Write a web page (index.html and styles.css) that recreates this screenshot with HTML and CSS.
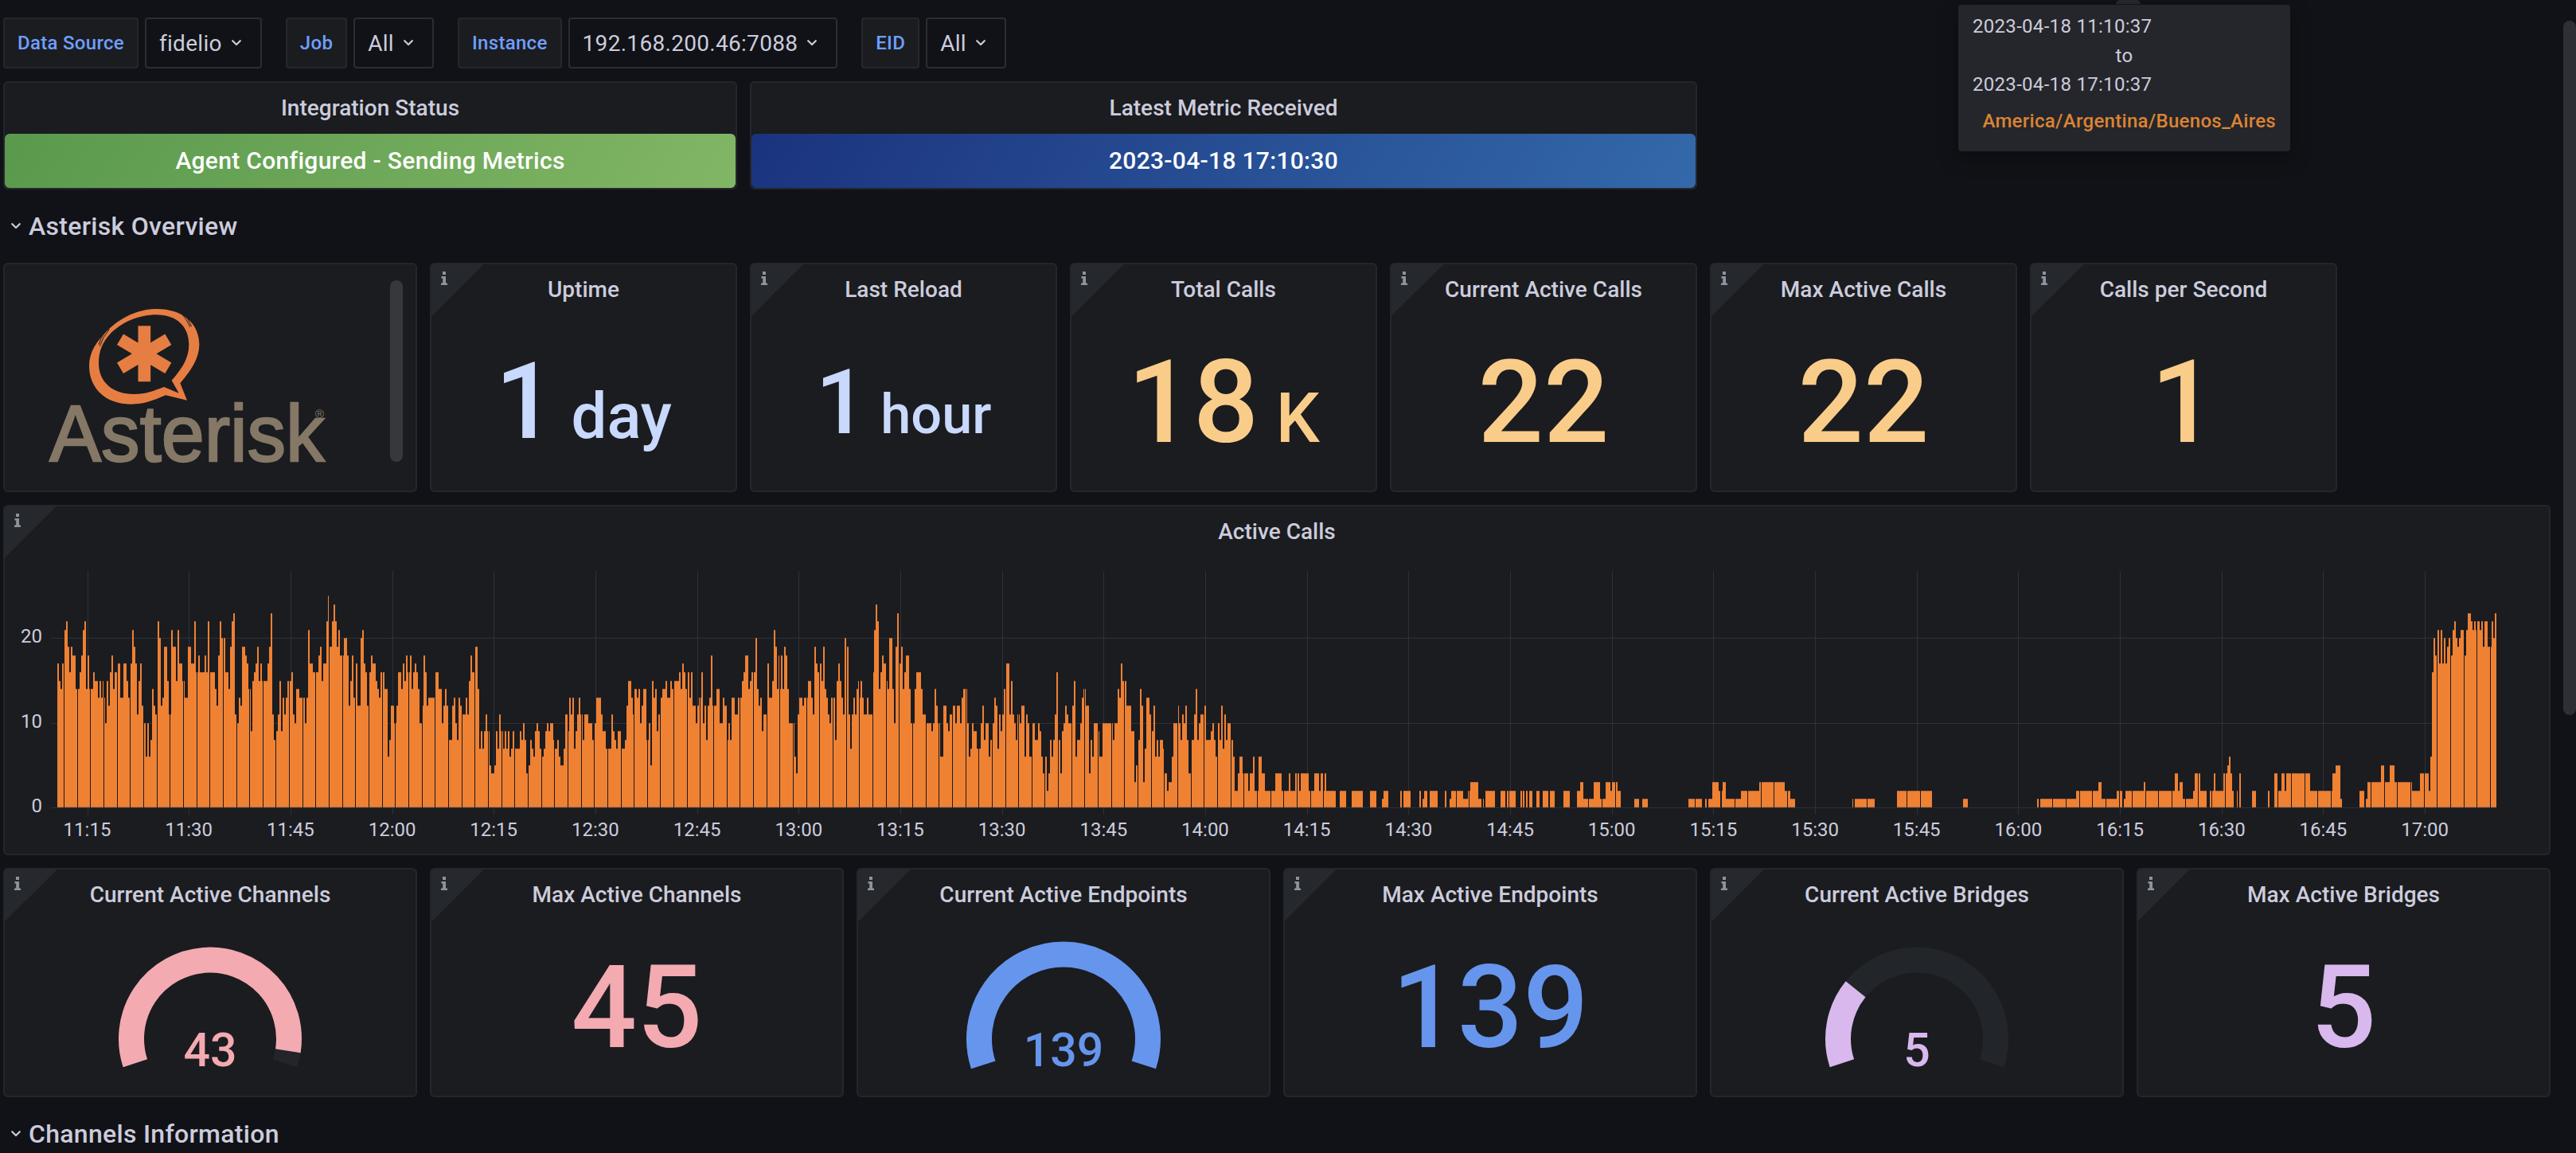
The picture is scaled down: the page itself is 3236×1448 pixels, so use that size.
FILE: index.html
```html
<!DOCTYPE html>
<html lang="en">
<head>
<meta charset="utf-8">
<title>Asterisk Overview</title>
<link rel="stylesheet" href="styles.css">
</head>
<body>
<svg class="defs" width="0" height="0">
  <symbol id="chev" viewBox="0 0 14 10"><path d="M2.2 2.2 L7 7 L11.8 2.2" fill="none" stroke="currentColor" stroke-width="2.2" stroke-linecap="round" stroke-linejoin="round"/></symbol>
  <symbol id="info" viewBox="0 0 8 17"><path d="M2 0H6V4H2ZM.4 6H6V14.4H8V17H0V14.4H2.2V8.6H.4Z" fill="currentColor"/></symbol>
</svg>
<main class="page">
  <div class="toolbar">
    <div class="var"><span class="var-label">Data Source</span><span class="var-value">fidelio<svg class="chev"><use href="#chev"/></svg></span></div>
    <div class="var"><span class="var-label">Job</span><span class="var-value">All<svg class="chev"><use href="#chev"/></svg></span></div>
    <div class="var"><span class="var-label">Instance</span><span class="var-value">192.168.200.46:7088<svg class="chev"><use href="#chev"/></svg></span></div>
    <div class="var"><span class="var-label">EID</span><span class="var-value">All<svg class="chev"><use href="#chev"/></svg></span></div>
  </div>

  <div class="grid">
    <section class="panel w7 h2"><h2>Integration Status</h2><div class="fill green">Agent Configured - Sending Metrics</div></section>
    <section class="panel w9 h2"><h2>Latest Metric Received</h2><div class="fill blue">2023-04-18 17:10:30</div></section>

    <h1 class="row-title"><svg class="chev"><use href="#chev"/></svg>Asterisk Overview</h1>

    <section class="panel w4 h4 logo-panel">
      <svg class="logo" viewBox="0 0 1140 690">
        <path fill="#e67e43" fill-rule="evenodd" d="M555 398 L474 379 C430 398 395 413 342 413 C250 413 186 355 186 268 C186 215 215 175 256 134 C305 86 370 54 440 54 C540 54 601 110 601 188 C601 240 570 285 529 334 Z M524 371 L497 323 C535 280 562 240 562 188 C562 120 515 76 440 76 C370 76 310 105 268 145 C235 180 222 215 222 258 C222 330 275 375 355 375 C400 375 430 362 468 348 Z"/>
        <path fill="none" stroke="#1b1c20" stroke-width="3" d="M262 130 Q238 158 226 194 M248 138 Q230 160 222 188 M528 66 Q552 88 566 122 M540 70 Q560 90 572 120"/>
        <path stroke="#e67e43" stroke-width="47" d="M394 118V328M303 169L484 277M484 169L303 277"/>
        <text x="37" y="626" class="logo-text" textLength="1036" lengthAdjust="spacingAndGlyphs">Asterisk</text>
        <text x="1037" y="466" class="logo-reg">®</text>
      </svg>
      <div class="inner-scroll"></div>
    </section>
    <section class="panel w3 h4"><i class="corner"><svg><use href="#info"/></svg></i><h2>Uptime</h2><div class="stat sky s133"><span>1</span><small> day</small></div></section>
    <section class="panel w3 h4"><i class="corner"><svg><use href="#info"/></svg></i><h2>Last Reload</h2><div class="stat sky s114"><span>1</span><small> hour</small></div></section>
    <section class="panel w3 h4"><i class="corner"><svg><use href="#info"/></svg></i><h2>Total Calls</h2><div class="stat amber"><span>18</span><small> K</small></div></section>
    <section class="panel w3 h4"><i class="corner"><svg><use href="#info"/></svg></i><h2>Current Active Calls</h2><div class="stat amber">22</div></section>
    <section class="panel w3 h4"><i class="corner"><svg><use href="#info"/></svg></i><h2>Max Active Calls</h2><div class="stat amber">22</div></section>
    <section class="panel w3 h4"><i class="corner"><svg><use href="#info"/></svg></i><h2>Calls per Second</h2><div class="stat amber">1</div></section>

    <section class="panel w24 h6"><i class="corner"><svg><use href="#info"/></svg></i><h2>Active Calls</h2>
      <svg id="chart" class="chart" viewBox="6 698 3196 374"></svg>
    </section>

    <section class="panel w4 h4"><i class="corner"><svg><use href="#info"/></svg></i><h2>Current Active Channels</h2>
      <svg class="gauge pink" viewBox="-258 -150.6 516 222"><path class="track" d="M-94.15 30.59A99 99 0 1 1 94.15 30.59"/><path class="arc" d="M-94.15 30.59A99 99 0 1 1 97.83 15.15"/><text y="34.4">43</text></svg></section>
    <section class="panel w4 h4"><i class="corner"><svg><use href="#info"/></svg></i><h2>Max Active Channels</h2><div class="stat pink">45</div></section>
    <section class="panel w4 h4"><i class="corner"><svg><use href="#info"/></svg></i><h2>Current Active Endpoints</h2>
      <svg class="gauge cornflower" viewBox="-258 -150.6 516 222"><path class="arc" d="M-100.8 32.76A106 106 0 1 1 100.8 32.76"/><text y="34.4">139</text></svg></section>
    <section class="panel w4 h4"><i class="corner"><svg><use href="#info"/></svg></i><h2>Max Active Endpoints</h2><div class="stat cornflower">139</div></section>
    <section class="panel w4 h4"><i class="corner"><svg><use href="#info"/></svg></i><h2>Current Active Bridges</h2>
      <svg class="gauge lilac" viewBox="-258 -150.6 516 222"><path class="track" d="M-94.15 30.59A99 99 0 1 1 94.15 30.59"/><path class="arc" d="M-94.15 30.59A99 99 0 0 1 -76.94 -62.3"/><text y="34.4">5</text></svg></section>
    <section class="panel w4 h4"><i class="corner"><svg><use href="#info"/></svg></i><h2>Max Active Bridges</h2><div class="stat lilac">5</div></section>

    <h1 class="row-title"><svg class="chev"><use href="#chev"/></svg>Channels Information</h1>
  </div>
</main>

<aside class="tooltip">
  <div>2023-04-18 11:10:37</div>
  <div class="mid">to</div>
  <div>2023-04-18 17:10:37</div>
  <div class="zone">America/Argentina/Buenos_Aires</div>
</aside>
<div class="page-scroll"></div>
<script src="chart.js"></script>
</body>
</html>
```
FILE: styles.css
```css
* { box-sizing: border-box; }
html, body { margin: 0; height: 1448px; overflow: hidden; }
body { background: #111217; color: #ccccdc; font-family: Roboto, "Liberation Sans", sans-serif; font-size: 28px; letter-spacing: 0.01071em; position: relative; }
.defs { position: absolute; }
.page { padding: 22px 0 0 4px; }
.toolbar { display: flex; gap: 30px; margin-bottom: 16px; }
.var { display: flex; gap: 8px; }
.var-label, .var-value { height: 64px; border: 2px solid #26272c; border-radius: 4px; display: flex; align-items: center; }
.var-label { background: #1b1c20; color: #6e9fff; font-size: 24px; font-weight: 500; padding: 0 16px; }
.var-value { border-color: #2c2d33; padding: 0 23px 0 16px; gap: 11px; }
.chev { width: 14px; height: 10px; flex: none; }
.grid { display: grid; width: 3200px; grid-template-columns: repeat(24, 1fr); grid-auto-rows: 60px; gap: 16px; grid-auto-flow: row; }
.panel { background: #1b1c20; border: 2px solid #25262b; border-radius: 6px; display: flex; flex-direction: column; position: relative; min-width: 0; overflow: hidden; }
.w3 { grid-column: span 3; } .w4 { grid-column: span 4; } .w7 { grid-column: span 7; } .w9 { grid-column: span 9; } .w24 { grid-column: span 24; }
.h2 { grid-row: span 2; } .h4 { grid-row: span 4; } .h6 { grid-row: span 6; }
.panel h2 { margin: 0; height: 62px; flex: none; font-size: 28px; font-weight: 500; line-height: 63px; text-align: center; letter-spacing: 0.02px; }
.fill { margin-top: 2px; padding-bottom: 2px; flex: 1; border-radius: 6px; color: #fff; font-weight: 500; font-size: 30px; display: flex; align-items: center; justify-content: center; }
.green { background: linear-gradient(120deg, #5a994d, #81b665); }
.blue { background: linear-gradient(120deg, #1b337e, #3369aa); }
.row-title { grid-column: 1 / -1; margin: 0; display: flex; align-items: center; gap: 9px; padding-left: 9px; font-size: 32px; font-weight: 500; letter-spacing: 0.3px; line-height: 60px; }
.corner { position: absolute; left: 0; top: 0; width: 65px; height: 65px; background: linear-gradient(135deg, #25282c 50%, transparent 50%); color: #91929e; }
.corner svg { display: block; width: 8px; height: 17px; margin: 9px 0 0 12px; }
.stat { flex: 1; display: flex; align-items: baseline; justify-content: center; font-size: 145px; font-weight: 500; line-height: 222px; letter-spacing: 0; white-space: pre; }
.stat small { font-size: 0.6em; line-height: 1; }
.s133 { font-size: 133px; }
.s114 { font-size: 114px; }
.sky { color: #c8d9fd; } .amber { color: #f9cd89; } .pink { color: #f3aab1; } .cornflower { color: #6695ed; } .lilac { color: #d8b8ed; }
.gauge { width: 516px; height: 222px; }
.gauge path { fill: none; stroke-width: 32; }
.gauge .arc { stroke: currentColor; }
.gauge .track { stroke: #22252a; }
.gauge text { fill: currentColor; font-size: 59px; font-weight: 500; text-anchor: middle; letter-spacing: 0; }
.logo-panel { flex-direction: row; }
.logo { width: 380px; height: 230px; margin: 38px 0 0 44px; }
.logo-text { font: 300px "Liberation Sans", Arial, sans-serif; fill: #857866; stroke: #857866; stroke-width: 7; letter-spacing: 0; }
.logo-reg { font: 46px "Liberation Sans", Arial, sans-serif; fill: #857866; letter-spacing: 0; }
.inner-scroll { width: 16px; height: 228px; margin: 20px 0 0 60px; border-radius: 8px; background: #37383c; }
.chart { width: 3196px; height: 374px; flex: none; }
.chart text { fill: #ccccdc; font-size: 24px; letter-spacing: 0; }
.tooltip { position: absolute; left: 2460px; top: 6px; width: 417px; height: 184px; padding: 9px 18px; background: #25262b; border-radius: 4px; font-size: 24px; line-height: 36.5px; box-shadow: 0 8px 24px rgba(1, 4, 9, .35); }
.tooltip::before { content: ""; position: absolute; top: -6px; left: 198px; width: 31px; height: 5px; background: #25262b; border-radius: 6px 6px 0 0; }
.mid { text-align: center; }
.zone { margin-top: 9px; text-align: right; color: #dd8433; font-weight: 500; white-space: nowrap; }
.page-scroll { position: absolute; left: 3220px; top: 26px; width: 16px; height: 872px; border-radius: 8px; background: #2e2f34; }
```
FILE: chart.js
```js
// Step data per stretch of the axis: "x:value" pairs, x measured from `from` at `k` units per pixel.
const stretches = [
  { from: 0, k: 1.96, end: 1568, d: "141:17 145:15 149:14 153:17 159:21 163:22 167:19 171:16 174:19 178:18 186:14 196:16 200:18 204:21 208:22 212:14 216:18 220:14 229:16 233:15 241:13 245:15 249:13 253:15 257:13 259:10 263:15 267:12 270:16 274:18 278:14 282:16 288:17 296:13 304:17 312:15 316:13 321:17 325:21 329:19 333:17 337:11 341:15 345:17 349:12 354:10 359:6 363:10 367:6 370:8 374:14 378:12 382:11 388:22 392:20 396:12 400:13 404:19 412:15 416:11 421:21 425:19 433:15 437:21 441:17 449:15 455:13 463:19 470:17 478:22 482:16 488:18 492:16 504:18 508:16 512:22 516:16 529:14 533:12 537:18 541:22 545:20 549:16 551:20 555:16 563:14 567:19 571:22 574:23 578:11 584:10 588:13 592:12 596:19 604:18 608:17 612:14 617:9 621:15 625:16 629:17 633:19 637:15 641:17 645:15 659:17 662:19 666:23 670:11 674:8 680:9 684:11 688:15 692:9 696:13 700:11 704:13 708:15 712:13 713:15 717:16 721:11 725:10 729:14 737:13 751:10 755:13 759:21 763:17 770:16 784:18 788:19 792:15 796:17 804:22 808:25 812:19 817:22 821:24 825:22 829:19 833:21 837:18 847:20 854:18 858:12 862:15 866:18 870:13 876:17 880:12 888:20 892:21 896:17 900:16 904:12 909:16 913:18 917:17 925:15 929:14 933:13 937:16 941:13 943:16 947:14 955:6 958:8 962:12 970:10 976:12 980:16 988:14 992:17 996:15 1000:18 1004:16 1009:18 1013:14 1017:16 1021:17 1025:16 1029:14 1033:10 1039:12 1043:18 1047:16 1051:12 1054:13 1072:16 1080:14 1088:10 1092:12 1096:14 1100:12 1104:8 1113:12 1117:13 1121:10 1125:8 1129:13 1133:12 1139:11 1147:13 1151:11 1154:15 1158:18 1162:16 1171:19 1176:14 1180:7 1184:9 1188:7 1192:9 1196:11 1200:9 1205:5 1209:4 1217:5 1221:9 1225:7 1229:11 1233:9 1238:7 1242:9 1246:7 1250:9 1254:6 1258:7 1262:9 1266:7 1280:9 1284:8 1288:10 1292:8 1296:4 1301:5 1305:8 1309:7 1313:6 1317:9 1321:10 1325:9 1329:7 1335:6 1339:7 1343:9 1347:10 1350:9 1354:10 1362:8 1366:7 1372:8 1376:6 1380:5 1388:7 1392:11 1397:9 1401:13 1405:11 1409:13 1413:7 1417:9 1421:11 1425:13 1429:11 1435:8 1439:11 1449:10 1458:8 1464:10 1468:13 1480:11 1484:9 1492:7 1505:11 1509:9 1513:8 1517:7 1521:9 1529:7 1539:8 1543:12 1546:15 1554:13 1558:11 1563:14" },
  { from: 800, k: 1.96, end: 1568, d: "0:13 4:14 8:10 12:12 16:14 24:8 29:10 33:5 37:15 41:13 45:14 49:9 53:11 59:13 63:14 71:15 75:13 82:15 86:14 91:15 104:16 108:14 112:17 116:16 120:14 125:16 129:13 133:16 137:12 145:10 149:12 153:13 158:16 162:10 167:12 171:8 174:12 178:13 182:18 186:12 196:14 204:10 212:13 216:12 221:8 225:10 229:8 233:13 241:11 249:13 259:15 263:16 267:18 274:14 278:15 282:16 292:20 296:14 300:12 304:13 308:9 312:11 321:17 325:13 333:15 337:21 341:19 345:14 349:18 353:14 355:18 359:14 363:19 367:18 371:14 374:10 388:6 392:4 396:11 400:13 408:12 412:13 421:15 429:13 433:11 437:19 441:17 445:16 451:17 455:15 459:19 463:14 467:13 470:11 474:10 478:13 488:8 492:15 496:17 500:15 504:13 508:11 512:20 517:19 521:11 525:7 529:11 533:13 537:11 541:14 545:15 549:13 551:15 555:13 559:11 567:13 570:11 580:16 584:21 588:24 592:22 596:14 600:16 604:18 608:17 613:15 617:14 621:20 629:14 633:10 637:19 641:23 645:17 651:19 655:14 659:16 662:18 670:14 674:10 684:14 688:16 700:14 704:11 712:10 725:9 729:10 733:14 737:12 741:10 747:6 755:12 762:10 766:9 770:11 776:12 784:10 788:12 796:10 800:13 804:14 813:10 817:6 821:7 825:10 829:9 837:7 847:10 851:12 855:8 858:10 866:6 870:8 876:10 880:13 884:12 888:7 892:11 896:9 900:11 904:14 909:17 917:11 921:15 925:11 929:10 933:8 937:11 943:10 947:12 955:6 958:11 962:10 966:6 972:10 980:8 988:10 992:9 996:6 1000:4 1005:6 1009:2 1013:4 1017:8 1021:6 1025:8 1029:11 1033:16 1037:8 1043:4 1047:9 1051:10 1054:12 1058:11 1062:10 1072:12 1076:15 1080:6 1084:8 1092:10 1096:13 1100:14 1105:12 1113:4 1117:8 1121:6 1125:10 1135:9 1139:6 1147:10 1172:8 1176:10 1184:14 1188:13 1192:17 1196:15 1205:12 1217:9 1225:3 1229:5 1235:8 1239:14 1243:12 1247:3 1250:7 1254:13 1262:11 1268:9 1272:12 1276:6 1280:8 1284:6 1288:8 1296:7 1300:4 1305:2 1309:3 1317:6 1321:10 1331:12 1335:10 1339:8 1343:11 1347:10 1350:12 1354:8 1358:4 1364:8 1372:11 1376:14 1380:8 1384:10 1388:11 1397:12 1401:8 1413:9 1417:10 1421:8 1425:6 1431:10 1435:8 1439:12 1443:7 1446:11 1450:8 1454:10 1464:8 1468:6 1472:2 1480:4 1484:6 1492:4 1505:2 1509:4 1517:6 1521:2 1531:6 1539:4 1546:2" },
  { from: 1600, k: 1.912, end: 1530, d: "0:2 4:4 19:2 36:4 40:2 52:4 56:2 57:4 61:2 65:4 84:2 98:4 109:2 113:4 120:2 122:4 126:2 149:0 159:2 174:0 187:2 214:0 231:2 247:0 260:1 264:2 275:0 304:2 308:0 310:2 329:0 350:2 354:0 358:1 361:2 369:0 375:2 394:0 411:2 415:0 423:1 426:2 438:0 440:2 455:1 467:2 472:3 491:1 499:0 501:1 505:0 509:2 532:0 545:2 556:0 560:2 564:0 566:2 581:0 593:2 597:0 599:2 602:0 606:2 610:0 614:2 621:0 631:2 639:0 646:2 662:0 664:2 675:0 696:2 711:0 729:2 736:3 744:1 769:3 784:1 797:3 809:2 813:3 820:2 822:3 826:2 834:0 866:1 878:0 883:1 899:0 996:1 1029:0 1036:1 1040:0 1042:1 1054:3 1069:2 1073:0 1075:2 1078:3 1086:1 1122:2 1166:3 1228:2 1241:1 1252:0 1390:1 1394:0 1396:1 1444:0 1497:2" },
  { from: 2400, k: 1.8756, end: 1380, d: "0:2 51:0 124:1 135:0 298:1 302:0 303:1 390:2 443:3 450:1 486:2 499:0 503:1 506:2 550:3 553:2 623:4 630:2 634:3 641:1 666:2 670:4 677:2 679:4 683:2 698:0 705:2 709:0 710:2 715:4 718:2 737:4 741:2 743:4 746:5 750:6 754:4 758:2 761:0 769:2 773:0 775:4 778:0 803:2 814:0 842:2 846:0 857:4 865:2 874:4 882:2 885:4 942:2 994:4 1002:5 1013:1 1017:0 1058:2 1069:0 1073:1 1077:3 1108:5 1116:3 1129:5 1140:3 1182:2 1200:4 1221:2 1225:6 1229:16 1232:20 1236:18 1242:21 1246:17 1249:21 1253:17 1257:20 1260:17 1264:19 1268:20 1272:18 1277:21 1281:22 1285:20 1289:19 1292:20 1296:21 1304:18 1309:21 1313:23 1320:22 1324:21 1328:22 1332:21 1334:22 1341:21 1345:22 1349:19 1352:22 1360:19 1369:22 1373:20 1377:23" }
];
const BASE = 1014, UNIT = 10.63;
const parts = [];
const rect = (x, y, w, h, fill) => parts.push(`<rect x="${x}" y="${y}" width="${w}" height="${h}" fill="${fill}"/>`);
const label = (x, y, anchor, t) => parts.push(`<text x="${x}" y="${y}" text-anchor="${anchor}">${t}</text>`);

[0, 10, 20].forEach(v => {
  const y = Math.round(BASE - v * UNIT);
  rect(64, y, 3072, 1, "#303136");
  label(53, y + 6, "end", v);
});
for (let i = 0; i < 24; i++) {
  const x = 109.5 + i * 127.68;
  rect(Math.round(x), 717, 1, 306, "#303136");
  const m = 11 * 60 + 15 + i * 15;
  label(x, 1050, "middle", Math.floor(m / 60) + ":" + String(m % 60).padStart(2, "0"));
}

// one-pixel gaps between groups of samples
const gaps = new Set();
for (let k = 0; k < 184; k++) gaps.add(Math.round(80 + k * 16.655));

for (const s of stretches) {
  const runs = s.d.split(" ").map(p => p.split(":").map(Number));
  runs.forEach(([x, v], i) => {
    if (!v) return;
    const a = Math.round(s.from + x / s.k);
    const b = Math.round(s.from + (i + 1 < runs.length ? runs[i + 1][0] : s.end) / s.k);
    const y = Math.round(BASE - v * UNIT);
    rect(a, y, b - a, BASE - y, "#ef8133");
    rect(a, y, b - a, 1, "#b4683a");
    rect(a, BASE - 1, b - a, 1, "#c4703a");
    for (let g = a; g < b; g++) if (gaps.has(g)) rect(g, y, 1, BASE - y, "#1b1c20");
  });
}
document.getElementById("chart").innerHTML = parts.join("");
```
